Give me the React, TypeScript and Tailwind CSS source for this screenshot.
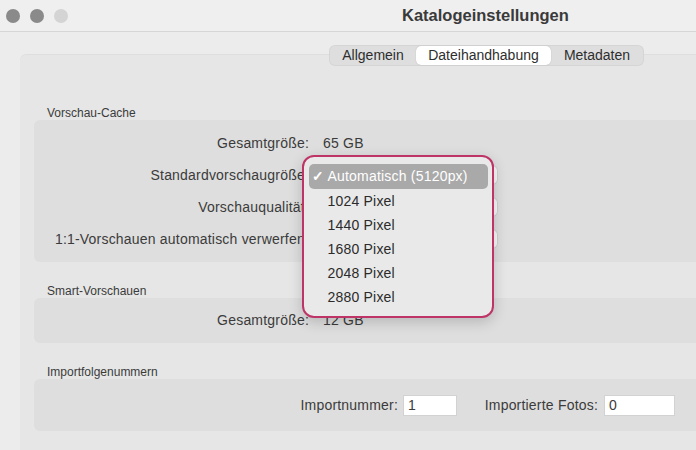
import React from 'react'

const font = { fontFamily: '"Liberation Sans", Arial, sans-serif' }

function Row({ label, children }: { label: string; children?: React.ReactNode }) {
  return (
    <div className="flex h-[32px] items-center">
      <div className="w-[275px] shrink-0 text-right text-[14px] tracking-[0.2px] text-[#3b3b3b]">{label}</div>
      <div className="ml-[14px] flex items-center text-[14px] tracking-[0.2px] text-[#3b3b3b]">{children}</div>
    </div>
  )
}

function PopupStub() {
  return <div className="ml-[-10px] h-[18px] w-[184px] rounded-[5px] bg-white/80 shadow-[0_0_0_1px_rgba(0,0,0,0.06)]" />
}

const sizes = ['1024 Pixel', '1440 Pixel', '1680 Pixel', '2048 Pixel', '2880 Pixel']

export default function App() {
  return (
    <div className="h-[450px] w-[696px] overflow-hidden bg-[#ececec]" style={font}>
      {/* title bar */}
      <div className="flex h-[32px] w-[960px] items-center border-b border-[#d6d6d6] bg-[#efefef] px-[6px]">
        <div className="flex gap-[10px]">
          <span className="h-[14px] w-[14px] rounded-full bg-[#8a8a8a]" />
          <span className="h-[14px] w-[14px] rounded-full bg-[#8a8a8a]" />
          <span className="h-[14px] w-[14px] rounded-full bg-[#d4d4d4]" />
        </div>
        <div className="ml-[334px] text-[16.5px] font-bold text-[#3a3a3a]">Katalogeinstellungen</div>
      </div>

      {/* tabs */}
      <div className="relative z-10 mt-[13px] flex h-[21px] w-[960px]">
        <div className="ml-[329px] flex h-[21px] items-center rounded-[6px] bg-[#dedede] px-[1px] text-[14px] text-[#2e2e2e] shadow-[inset_0_0_0_1px_rgba(0,0,0,0.04)]">
          <div className="w-[86px] text-center">Allgemein</div>
          <div className="flex h-[19px] w-[135px] items-center justify-center rounded-[5px] bg-white shadow-[0_0_1px_rgba(0,0,0,0.25)]">
            Dateihandhabung
          </div>
          <div className="w-[92px] text-center">Metadaten</div>
        </div>
      </div>

      {/* panel */}
      <div className="mt-[-12px] ml-[20px] w-[760px] rounded-[6px] bg-[#e6e6e6] pt-[52px] pl-[14px] pb-[40px] shadow-[inset_0_1px_0_rgba(0,0,0,0.03)]">
        <div className="h-[14px] pl-[13px] text-[12px] leading-[14px] text-[#3b3b3b]">Vorschau-Cache</div>
        <div className="relative rounded-[6px] bg-[#dedede] py-[7px]">
          <Row label="Gesamtgröße:">65 GB</Row>
          <Row label="Standardvorschaugröße:">
            <PopupStub />
          </Row>
          <Row label="Vorschauqualität:">
            <PopupStub />
          </Row>
          <Row label="1:1-Vorschauen automatisch verwerfen:">
            <PopupStub />
          </Row>

          {/* open menu */}
          <div className="absolute top-[35px] left-[268px] z-20 h-[163px] w-[192px] rounded-[12px] border-[2.5px] border-[#bf3466] bg-[#e9e9e9] px-[4.5px] pt-[6.5px] shadow-[0_4px_14px_rgba(0,0,0,0.18)]">
            <div className="flex h-[25px] items-center rounded-[5px] bg-[#a9a9a9] text-[14px] tracking-[0.2px] text-white">
              <span className="w-[19px] pl-[3px] text-[14px] font-bold">✓</span>
              <span>Automatisch (5120px)</span>
            </div>
            {sizes.map((s) => (
              <div key={s} className="flex h-[24.2px] items-center pl-[19px] pt-[1px] text-[14px] tracking-[0.2px] text-[#2b2b2b]">
                {s}
              </div>
            ))}
          </div>
        </div>

        <div className="mt-[22px] h-[14px] pl-[13px] text-[12px] leading-[14px] text-[#3b3b3b]">Smart-Vorschauen</div>
        <div className="flex h-[45px] items-center rounded-[6px] bg-[#dedede]">
          <div className="w-full">
            <Row label="Gesamtgröße:">12 GB</Row>
          </div>
        </div>

        <div className="mt-[22px] h-[14px] pl-[13px] text-[12px] leading-[14px] text-[#3b3b3b]">Importfolgenummern</div>
        <div className="flex h-[52px] items-center rounded-[6px] bg-[#dedede] text-[14px] tracking-[0.2px] text-[#3b3b3b]">
          <div className="ml-[234px] w-[130px] text-right">Importnummer:</div>
          <div className="ml-[6px] flex h-[19px] w-[52px] items-center bg-white pl-[4px] shadow-[0_0_0_1px_rgba(0,0,0,0.05)]">1</div>
          <div className="ml-[4px] w-[138px] text-right">Importierte Fotos:</div>
          <div className="ml-[7px] flex h-[19px] w-[69px] items-center bg-white pl-[4px] shadow-[0_0_0_1px_rgba(0,0,0,0.05)]">0</div>
        </div>
      </div>
    </div>
  )
}
